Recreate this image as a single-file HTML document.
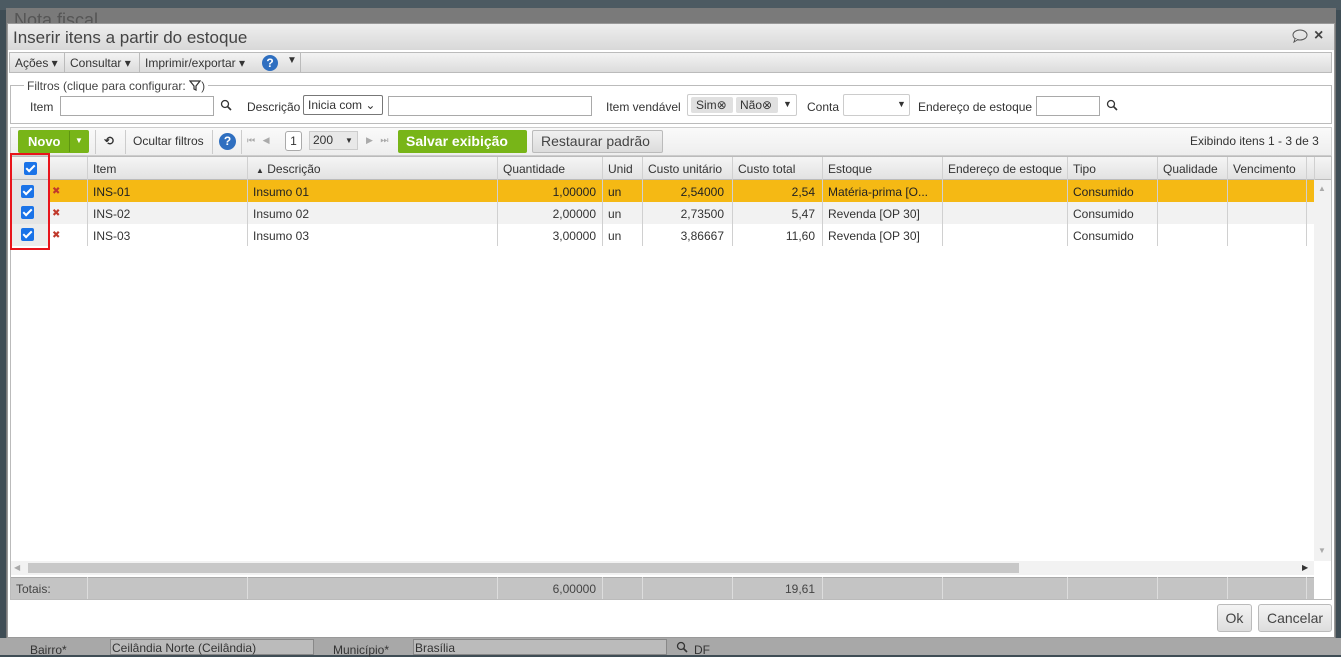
<!DOCTYPE html>
<html><head><meta charset="utf-8"><style>
*{box-sizing:border-box;margin:0;padding:0}
body{width:1341px;height:655px;overflow:hidden;background:#3f4d55;font-family:"Liberation Sans","DejaVu Sans",sans-serif;font-size:12px;color:#333;position:relative}
.a{position:absolute}
.t{position:absolute;white-space:nowrap}
.cb{position:absolute;width:13px;height:13px;background:#1a73e8;border-radius:2px}
.cb:after{content:"";position:absolute;left:4px;top:1px;width:3px;height:7px;border:solid #fff;border-width:0 2px 2px 0;transform:rotate(45deg)}
.vl{position:absolute;width:1px;background:#d0d0d0}
.inp{position:absolute;background:#fff;border:1px solid #a9a9a9}
.x{position:absolute;color:#c0392b;font-size:10px;font-weight:bold}
</style></head><body>
<div class="a" style="left:0;top:0;width:1341px;height:10px;background:#4c5a62"></div>
<div class="a" style="left:6px;top:8px;width:1330px;height:630px;background:#7a7a7a"></div>
<div class="t" style="left:14px;top:10px;font-size:18px;color:#555">Nota fiscal</div>
<div class="a" style="left:0;top:638px;width:1341px;height:17px;background:#a8a8a8"></div>
<div class="t" style="left:30px;top:643px;color:#333">Bairro*</div>
<div class="a" style="left:110px;top:639px;width:204px;height:16px;background:#bbb;border:1px solid #888"></div>
<div class="t" style="left:112px;top:641px;color:#333">Ceilândia Norte (Ceilândia)</div>
<div class="t" style="left:333px;top:643px;color:#333">Município*</div>
<div class="a" style="left:413px;top:639px;width:254px;height:16px;background:#bbb;border:1px solid #888"></div>
<div class="t" style="left:415px;top:641px;color:#333">Brasília</div>
<svg class="a" style="left:676px;top:641px" width="12" height="12"><circle cx="5" cy="5" r="3.5" fill="none" stroke="#333" stroke-width="1.3"/><path d="M7.5 7.5 L11 11" stroke="#333" stroke-width="1.6"/></svg>
<div class="t" style="left:694px;top:643px">DF</div>
<div class="a" style="left:7px;top:23px;width:1328px;height:615px;background:#fff;border:1px solid #999"></div>
<div class="a" style="left:8px;top:24px;width:1326px;height:26px;background:linear-gradient(#eeeeee,#d8d8d8)"></div>
<div class="t" style="left:13px;top:28px;font-size:17px;color:#444">Inserir itens a partir do estoque</div>
<svg class="a" style="left:1292px;top:29px" width="16" height="14"><ellipse cx="8" cy="6" rx="7" ry="5" fill="none" stroke="#555"/><path d="M3 10 L2 13 L6 10.5" fill="#fff" stroke="#555"/></svg>
<div class="t" style="left:1314px;top:27px;font-size:16px;font-weight:bold;color:#444">×</div>
<div class="a" style="left:9px;top:52px;width:1323px;height:21px;background:linear-gradient(#f3f3f3,#dcdcdc);border:1px solid #bbb"></div>
<div class="t" style="left:15px;top:56px">Ações ▾</div>
<div class="vl" style="left:64px;top:53px;height:19px;background:#bbb"></div>
<div class="t" style="left:70px;top:56px">Consultar ▾</div>
<div class="vl" style="left:139px;top:53px;height:19px;background:#bbb"></div>
<div class="t" style="left:145px;top:56px">Imprimir/exportar ▾</div>
<div class="a" style="left:262px;top:55px;width:16px;height:16px;border-radius:50%;background:#2f6fc0;color:#fff;font-weight:bold;font-size:12px;text-align:center;line-height:16px">?</div>
<div class="t" style="left:287px;top:55px;font-size:10px">▼</div>
<div class="vl" style="left:300px;top:53px;height:19px;background:#bbb"></div>
<div class="a" style="left:10px;top:85px;width:1322px;height:39px;border:1px solid #bbb"></div>
<div class="t" style="left:24px;top:79px;background:#fff;padding:0 3px;color:#444">Filtros (clique para configurar: <svg width="12" height="11" style="vertical-align:-1px"><path d="M1 1 H11 L7 6 V10 L5 9 V6 Z" fill="none" stroke="#333" stroke-width="1.2"/></svg>)</div>
<div class="t" style="left:30px;top:100px">Item</div>
<div class="inp" style="left:60px;top:96px;width:154px;height:20px"></div>
<svg class="a" style="left:220px;top:99px" width="12" height="12"><circle cx="5" cy="5" r="3.5" fill="none" stroke="#333" stroke-width="1.3"/><path d="M7.5 7.5 L11 11" stroke="#333" stroke-width="1.6"/></svg>
<div class="t" style="left:247px;top:100px">Descrição</div>
<div class="inp" style="left:303px;top:95px;width:80px;height:20px;border-color:#777;border-radius:2px"></div>
<div class="t" style="left:308px;top:98px">Inicia com ⌄</div>
<div class="inp" style="left:388px;top:96px;width:204px;height:20px"></div>
<div class="t" style="left:606px;top:100px">Item vendável</div>
<div class="inp" style="left:687px;top:94px;width:110px;height:22px;border-color:#ccc;border-radius:2px"></div>
<div class="a" style="left:691px;top:97px;width:42px;height:16px;background:#e0e0e0;border-radius:2px"></div>
<div class="t" style="left:696px;top:98px">Sim⊗</div>
<div class="a" style="left:736px;top:97px;width:42px;height:16px;background:#e0e0e0;border-radius:2px"></div>
<div class="t" style="left:740px;top:98px">Não⊗</div>
<div class="t" style="left:783px;top:99px;font-size:9px">▼</div>
<div class="t" style="left:807px;top:100px">Conta</div>
<div class="inp" style="left:843px;top:94px;width:67px;height:22px;border-color:#ccc;border-radius:2px"></div>
<div class="t" style="left:897px;top:99px;font-size:9px">▼</div>
<div class="t" style="left:918px;top:100px">Endereço de estoque</div>
<div class="inp" style="left:1036px;top:96px;width:64px;height:20px"></div>
<svg class="a" style="left:1106px;top:99px" width="12" height="12"><circle cx="5" cy="5" r="3.5" fill="none" stroke="#333" stroke-width="1.3"/><path d="M7.5 7.5 L11 11" stroke="#333" stroke-width="1.6"/></svg>
<div class="a" style="left:10px;top:127px;width:1322px;height:29px;background:linear-gradient(#fafafa,#eee);border:1px solid #ccc"></div>
<div class="a" style="left:18px;top:130px;width:71px;height:23px;background:#78b518;border-radius:2px"></div>
<div class="t" style="left:28px;top:134px;color:#fff;font-weight:bold;font-size:13px">Novo</div>
<div class="vl" style="left:69px;top:131px;height:21px;background:#5e9510"></div>
<div class="t" style="left:75px;top:136px;color:#fff;font-size:8px">▼</div>
<div class="vl" style="left:95px;top:130px;height:24px;background:#ccc"></div>
<div class="t" style="left:104px;top:134px;font-weight:bold">⟲</div>
<div class="vl" style="left:125px;top:130px;height:24px;background:#ccc"></div>
<div class="t" style="left:133px;top:134px">Ocultar filtros</div>
<div class="vl" style="left:212px;top:130px;height:24px;background:#ccc"></div>
<div class="a" style="left:219px;top:133px;width:17px;height:17px;border-radius:50%;background:#2f6fc0;color:#fff;font-weight:bold;text-align:center;line-height:17px">?</div>
<div class="vl" style="left:241px;top:130px;height:24px;background:#ccc"></div>
<div class="t" style="left:247px;top:135px;color:#aaa;font-size:9px">⏮ &nbsp; ◀</div>
<div class="a" style="left:285px;top:131px;width:17px;height:20px;border:1px solid #aaa;border-radius:3px;background:#fff;text-align:center;line-height:18px">1</div>
<div class="a" style="left:309px;top:131px;width:49px;height:19px;border:1px solid #ccc;background:#e8e8e8"></div>
<div class="t" style="left:313px;top:133px">200</div>
<div class="t" style="left:345px;top:136px;font-size:8px">▼</div>
<div class="t" style="left:366px;top:135px;color:#aaa;font-size:9px">▶ &nbsp; ⏭</div>
<div class="a" style="left:398px;top:130px;width:129px;height:23px;background:#78b518;border-radius:2px"></div>
<div class="t" style="left:406px;top:133px;color:#fff;font-weight:bold;font-size:14px">Salvar exibição</div>
<div class="a" style="left:532px;top:130px;width:131px;height:23px;background:linear-gradient(#f0f0f0,#dcdcdc);border:1px solid #bbb;border-radius:2px"></div>
<div class="t" style="left:541px;top:133px;font-size:14px;color:#444">Restaurar padrão</div>
<div class="t" style="left:1190px;top:134px">Exibindo itens 1 - 3 de 3</div>
<div class="a" style="left:10px;top:156px;width:1322px;height:444px;border:1px solid #bbb;background:#fff"></div>
<div class="a" style="left:11px;top:157px;width:1320px;height:23px;background:linear-gradient(#f5f5f5,#e2e2e2);border-bottom:1px solid #bbb"></div>
<div class="a" style="left:11px;top:180px;width:1303px;height:22px;background:#f5b914"></div>
<div class="a" style="left:11px;top:202px;width:1303px;height:22px;background:#f2f2f2"></div>
<div class="a" style="left:11px;top:180px;width:37px;height:66px;background:#e4e4e4"></div>
<div class="a" style="left:11px;top:224px;width:37px;height:22px;background:#ececec"></div>
<div class="vl" style="left:48px;top:157px;height:23px;background:#ccc"></div>
<div class="vl" style="left:87px;top:157px;height:89px"></div>
<div class="vl" style="left:247px;top:157px;height:89px"></div>
<div class="vl" style="left:497px;top:157px;height:89px"></div>
<div class="vl" style="left:602px;top:157px;height:89px"></div>
<div class="vl" style="left:642px;top:157px;height:89px"></div>
<div class="vl" style="left:732px;top:157px;height:89px"></div>
<div class="vl" style="left:822px;top:157px;height:89px"></div>
<div class="vl" style="left:942px;top:157px;height:89px"></div>
<div class="vl" style="left:1067px;top:157px;height:89px"></div>
<div class="vl" style="left:1157px;top:157px;height:89px"></div>
<div class="vl" style="left:1227px;top:157px;height:89px"></div>
<div class="vl" style="left:1306px;top:157px;height:89px"></div>
<div class="vl" style="left:1314px;top:157px;height:23px"></div>
<div class="cb" style="left:24px;top:162px"></div>
<div class="t" style="left:93px;top:162px">Item</div>
<div class="t" style="left:256px;top:162px"><span style="font-size:8px">▲</span> Descrição</div>
<div class="t" style="left:503px;top:162px">Quantidade</div>
<div class="t" style="left:608px;top:162px">Unid</div>
<div class="t" style="left:648px;top:162px">Custo unitário</div>
<div class="t" style="left:738px;top:162px">Custo total</div>
<div class="t" style="left:828px;top:162px">Estoque</div>
<div class="t" style="left:948px;top:162px">Endereço de estoque</div>
<div class="t" style="left:1073px;top:162px">Tipo</div>
<div class="t" style="left:1163px;top:162px">Qualidade</div>
<div class="t" style="left:1233px;top:162px">Vencimento</div>
<div class="cb" style="left:21px;top:185px"></div><div class="x" style="left:52px;top:186px">✖</div>
<div class="cb" style="left:21px;top:206px"></div><div class="x" style="left:52px;top:208px">✖</div>
<div class="cb" style="left:21px;top:228px"></div><div class="x" style="left:52px;top:230px">✖</div>
<div class="t" style="left:93px;top:185px;color:#222">INS-01</div><div class="t" style="left:253px;top:185px;color:#222">Insumo 01</div>
<div class="t" style="left:503px;top:185px;width:93px;text-align:right;color:#222">1,00000</div><div class="t" style="left:608px;top:185px;color:#222">un</div>
<div class="t" style="left:648px;top:185px;width:76px;text-align:right;color:#222">2,54000</div><div class="t" style="left:738px;top:185px;width:77px;text-align:right;color:#222">2,54</div>
<div class="t" style="left:828px;top:185px;color:#222">Matéria-prima [O...</div><div class="t" style="left:1073px;top:185px;color:#222">Consumido</div>
<div class="t" style="left:93px;top:207px">INS-02</div><div class="t" style="left:253px;top:207px">Insumo 02</div>
<div class="t" style="left:503px;top:207px;width:93px;text-align:right">2,00000</div><div class="t" style="left:608px;top:207px">un</div>
<div class="t" style="left:648px;top:207px;width:76px;text-align:right">2,73500</div><div class="t" style="left:738px;top:207px;width:77px;text-align:right">5,47</div>
<div class="t" style="left:828px;top:207px">Revenda [OP 30]</div><div class="t" style="left:1073px;top:207px">Consumido</div>
<div class="t" style="left:93px;top:229px">INS-03</div><div class="t" style="left:253px;top:229px">Insumo 03</div>
<div class="t" style="left:503px;top:229px;width:93px;text-align:right">3,00000</div><div class="t" style="left:608px;top:229px">un</div>
<div class="t" style="left:648px;top:229px;width:76px;text-align:right">3,86667</div><div class="t" style="left:738px;top:229px;width:77px;text-align:right">11,60</div>
<div class="t" style="left:828px;top:229px">Revenda [OP 30]</div><div class="t" style="left:1073px;top:229px">Consumido</div>
<div class="a" style="left:10px;top:153px;width:40px;height:97px;border:2px solid #e8141b"></div>
<div class="a" style="left:1314px;top:180px;width:17px;height:381px;background:#f2f2f2"></div>
<div class="t" style="left:1318px;top:184px;color:#aaa;font-size:8px">▲</div>
<div class="t" style="left:1318px;top:546px;color:#aaa;font-size:8px">▼</div>
<div class="a" style="left:11px;top:561px;width:1303px;height:14px;background:#f2f2f2"></div>
<div class="a" style="left:28px;top:563px;width:991px;height:10px;background:#c8c8c8"></div>
<div class="t" style="left:14px;top:563px;color:#aaa;font-size:8px">◀</div>
<div class="t" style="left:1302px;top:563px;color:#333;font-size:8px">▶</div>
<div class="a" style="left:11px;top:577px;width:1303px;height:22px;background:#c4c4c4;border-top:1px solid #aaa"></div>
<div class="t" style="left:16px;top:582px;color:#444">Totais:</div>
<div class="t" style="left:503px;top:582px;width:93px;text-align:right;color:#444">6,00000</div>
<div class="t" style="left:738px;top:582px;width:77px;text-align:right;color:#444">19,61</div>
<div class="vl" style="left:87px;top:577px;height:22px;background:#ddd"></div>
<div class="vl" style="left:247px;top:577px;height:22px;background:#ddd"></div>
<div class="vl" style="left:497px;top:577px;height:22px;background:#ddd"></div>
<div class="vl" style="left:602px;top:577px;height:22px;background:#ddd"></div>
<div class="vl" style="left:642px;top:577px;height:22px;background:#ddd"></div>
<div class="vl" style="left:732px;top:577px;height:22px;background:#ddd"></div>
<div class="vl" style="left:822px;top:577px;height:22px;background:#ddd"></div>
<div class="vl" style="left:942px;top:577px;height:22px;background:#ddd"></div>
<div class="vl" style="left:1067px;top:577px;height:22px;background:#ddd"></div>
<div class="vl" style="left:1157px;top:577px;height:22px;background:#ddd"></div>
<div class="vl" style="left:1227px;top:577px;height:22px;background:#ddd"></div>
<div class="vl" style="left:1306px;top:577px;height:22px;background:#ddd"></div>
<div class="a" style="left:1217px;top:604px;width:35px;height:28px;background:linear-gradient(#f4f4f4,#ddd);border:1px solid #bbb;border-radius:3px;text-align:center;line-height:26px;font-size:14px;color:#444">Ok</div>
<div class="a" style="left:1258px;top:604px;width:74px;height:28px;background:linear-gradient(#f4f4f4,#ddd);border:1px solid #bbb;border-radius:3px;text-align:center;line-height:26px;font-size:14px;color:#444">Cancelar</div>
</body></html>
